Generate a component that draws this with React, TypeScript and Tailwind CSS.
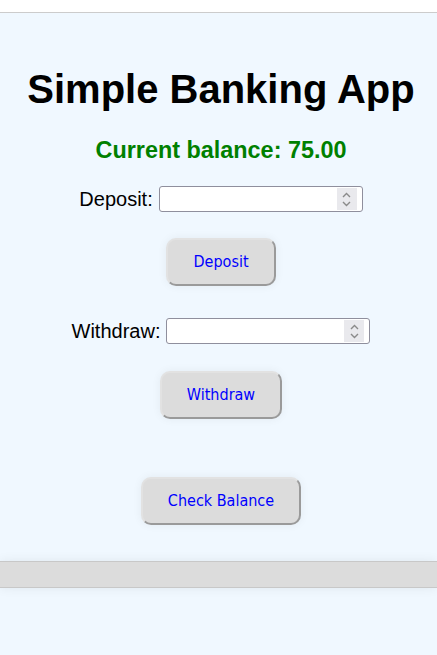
const btn =
  'rounded-[10px] border-2 border-t-[#e2e2e2] border-l-[#e2e2e2] border-r-[#9a9a9a] border-b-[#9a9a9a] bg-[#dcdcdc] px-[25px] py-[13px] text-[16px] leading-[18px] text-[#0000ff] shadow-[0_0_10px_rgba(0,0,0,0.06)] font-["DejaVu_Sans_Condensed","DejaVu_Sans",sans-serif] [font-stretch:semi-condensed]';

const Spinner = () => (
  <span className="pointer-events-none absolute top-[2px] right-[6px] bottom-[2px] flex w-[20px] flex-col items-center justify-center gap-[3px] bg-[#e9e9ed]">
    <svg width="9" height="6" viewBox="0 0 9 6" fill="none" stroke="#8a8a8a" strokeWidth="1.4">
      <path d="M1 5 L4.5 1.5 L8 5" />
    </svg>
    <svg width="9" height="6" viewBox="0 0 9 6" fill="none" stroke="#8a8a8a" strokeWidth="1.4">
      <path d="M1 1 L4.5 4.5 L8 1" />
    </svg>
  </span>
);

const AmountRow = ({ label }: { label: string }) => (
  <div className="flex items-center justify-center gap-[6px]">
    <label className="text-[20px] leading-[23px] text-black">{label}</label>
    <div className="relative">
      <input
        type="number"
        className="block h-[26px] w-[204px] rounded-[3px] border border-[#8f8f9d] bg-white px-1 text-[13px] [appearance:textfield] [&::-webkit-inner-spin-button]:appearance-none [&::-webkit-outer-spin-button]:appearance-none"
      />
      <Spinner />
    </div>
  </div>
);

export default function App() {
  return (
    <div className="min-h-screen bg-[#f0f8ff] font-['Liberation_Sans',Arial,sans-serif]">
      <div className="h-[13px] border-b border-[#cccccc] bg-white" />

      <main className="flex flex-col items-center pl-[5px] text-center">
        <h1 className="mt-[53px] text-[40px] font-bold leading-[46px] text-black">Simple Banking App</h1>
        <h2 className="mt-[25px] text-[23.4px] font-bold leading-[26px] text-[#008000]">Current balance: 75.00</h2>

        <div className="mt-[23px]">
          <AmountRow label="Deposit:" />
        </div>
        <button className={`mt-[26px] ${btn}`}>Deposit</button>

        <div className="mt-[32px]">
          <AmountRow label="Withdraw:" />
        </div>
        <button className={`mt-[27px] ${btn}`}>Withdraw</button>

        <button className={`mt-[58px] ${btn}`}>Check Balance</button>
      </main>

      <footer className="mt-[36px] h-[27px] border-y border-[#c8c8c8] bg-[#dcdcdc] shadow-[0_0_12px_rgba(0,0,0,0.07)]" />
    </div>
  );
}
